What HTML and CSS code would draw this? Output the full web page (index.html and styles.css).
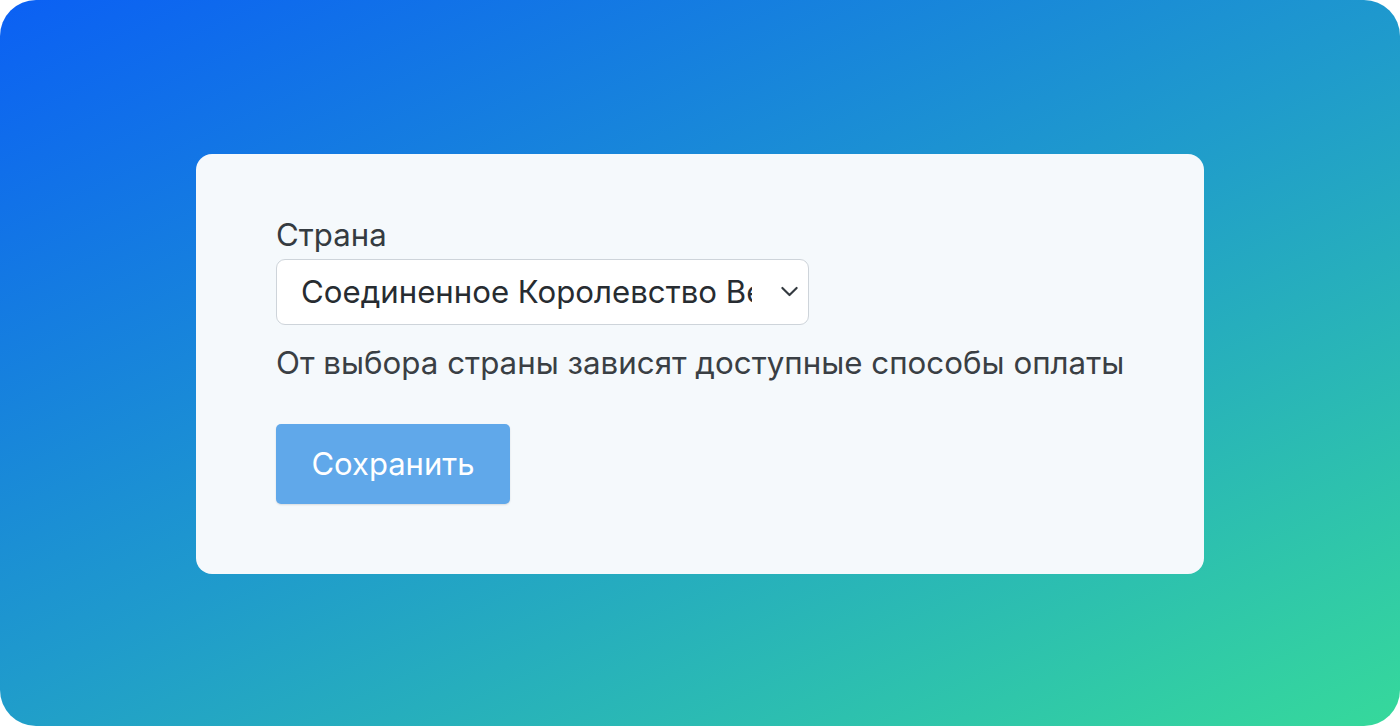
FILE: index.html
```html
<!DOCTYPE html>
<html lang="ru">
<head>
    <meta charset="UTF-8">
    <meta name="viewport" content="width=device-width, initial-scale=1.0">
    <title>Страна</title>
    <link rel="stylesheet" href="styles.css">
</head>
<body>
    <div class="frame">
        <form class="card">
            <label class="form-label" for="country">Страна</label>
            <div class="select-wrap">
                <select id="country" class="form-select">
                    <option>Соединенное Королевство Великобритании и Северной Ирландии</option>
                </select>
                <svg class="chevron" viewBox="0 0 16 16" width="19" height="19">
                    <path d="M2 5l6 6 6-6" fill="none" stroke="#343a40" stroke-width="1.8" stroke-linecap="round" stroke-linejoin="round"/>
                </svg>
            </div>
            <p class="form-text">От выбора страны зависят доступные способы оплаты</p>
            <button type="button" class="btn" disabled>Сохранить</button>
        </form>
    </div>
</body>
</html>
```

FILE: styles.css
```css
body {
    margin: 0;
    background: #fff;
    font-family: Inter, "Noto Sans", sans-serif;
}
.frame {
    width: 1400px;
    height: 726px;
    border-radius: 36px;
    background: linear-gradient(155deg, #0b60f4 0%, #1f9bcc 50%, #36d99b 100%);
    display: flex;
    align-items: center;
    justify-content: center;
}
.card {
    box-sizing: border-box;
    width: 1008px;
    height: 420px;
    margin-top: 1px;
    padding: 63px 80px;
    background: #f5f9fc;
    border-radius: 16px;
}
.form-label {
    display: block;
    font-size: 31.2px;
    line-height: 37px;
    color: #353b41;
    margin-bottom: 5px;
}
.select-wrap {
    position: relative;
    width: 533px;
}
.form-select {
    -webkit-appearance: none;
    appearance: none;
    box-sizing: border-box;
    width: 100%;
    height: 66px;
    padding: 0 56px 0 24px;
    font-family: inherit;
    font-size: 31.2px;
    color: #272c31;
    background: #fff;
    border: 1px solid #ced4da;
    border-radius: 9px;
    outline: none;
}
.chevron {
    position: absolute;
    right: 10px;
    top: 23px;
    pointer-events: none;
}
.form-text {
    margin: 20px 0 0;
    font-size: 31.3px;
    line-height: 37px;
    color: #3a3f44;
    white-space: nowrap;
}
.btn {
    display: block;
    margin-top: 42px;
    width: 234px;
    height: 80px;
    border: none;
    border-radius: 5px;
    background: #60a8ea;
    color: #fff;
    font-family: inherit;
    font-size: 31px;
    box-shadow: 0 1px 2px rgba(0, 0, 0, 0.12);
}
```
